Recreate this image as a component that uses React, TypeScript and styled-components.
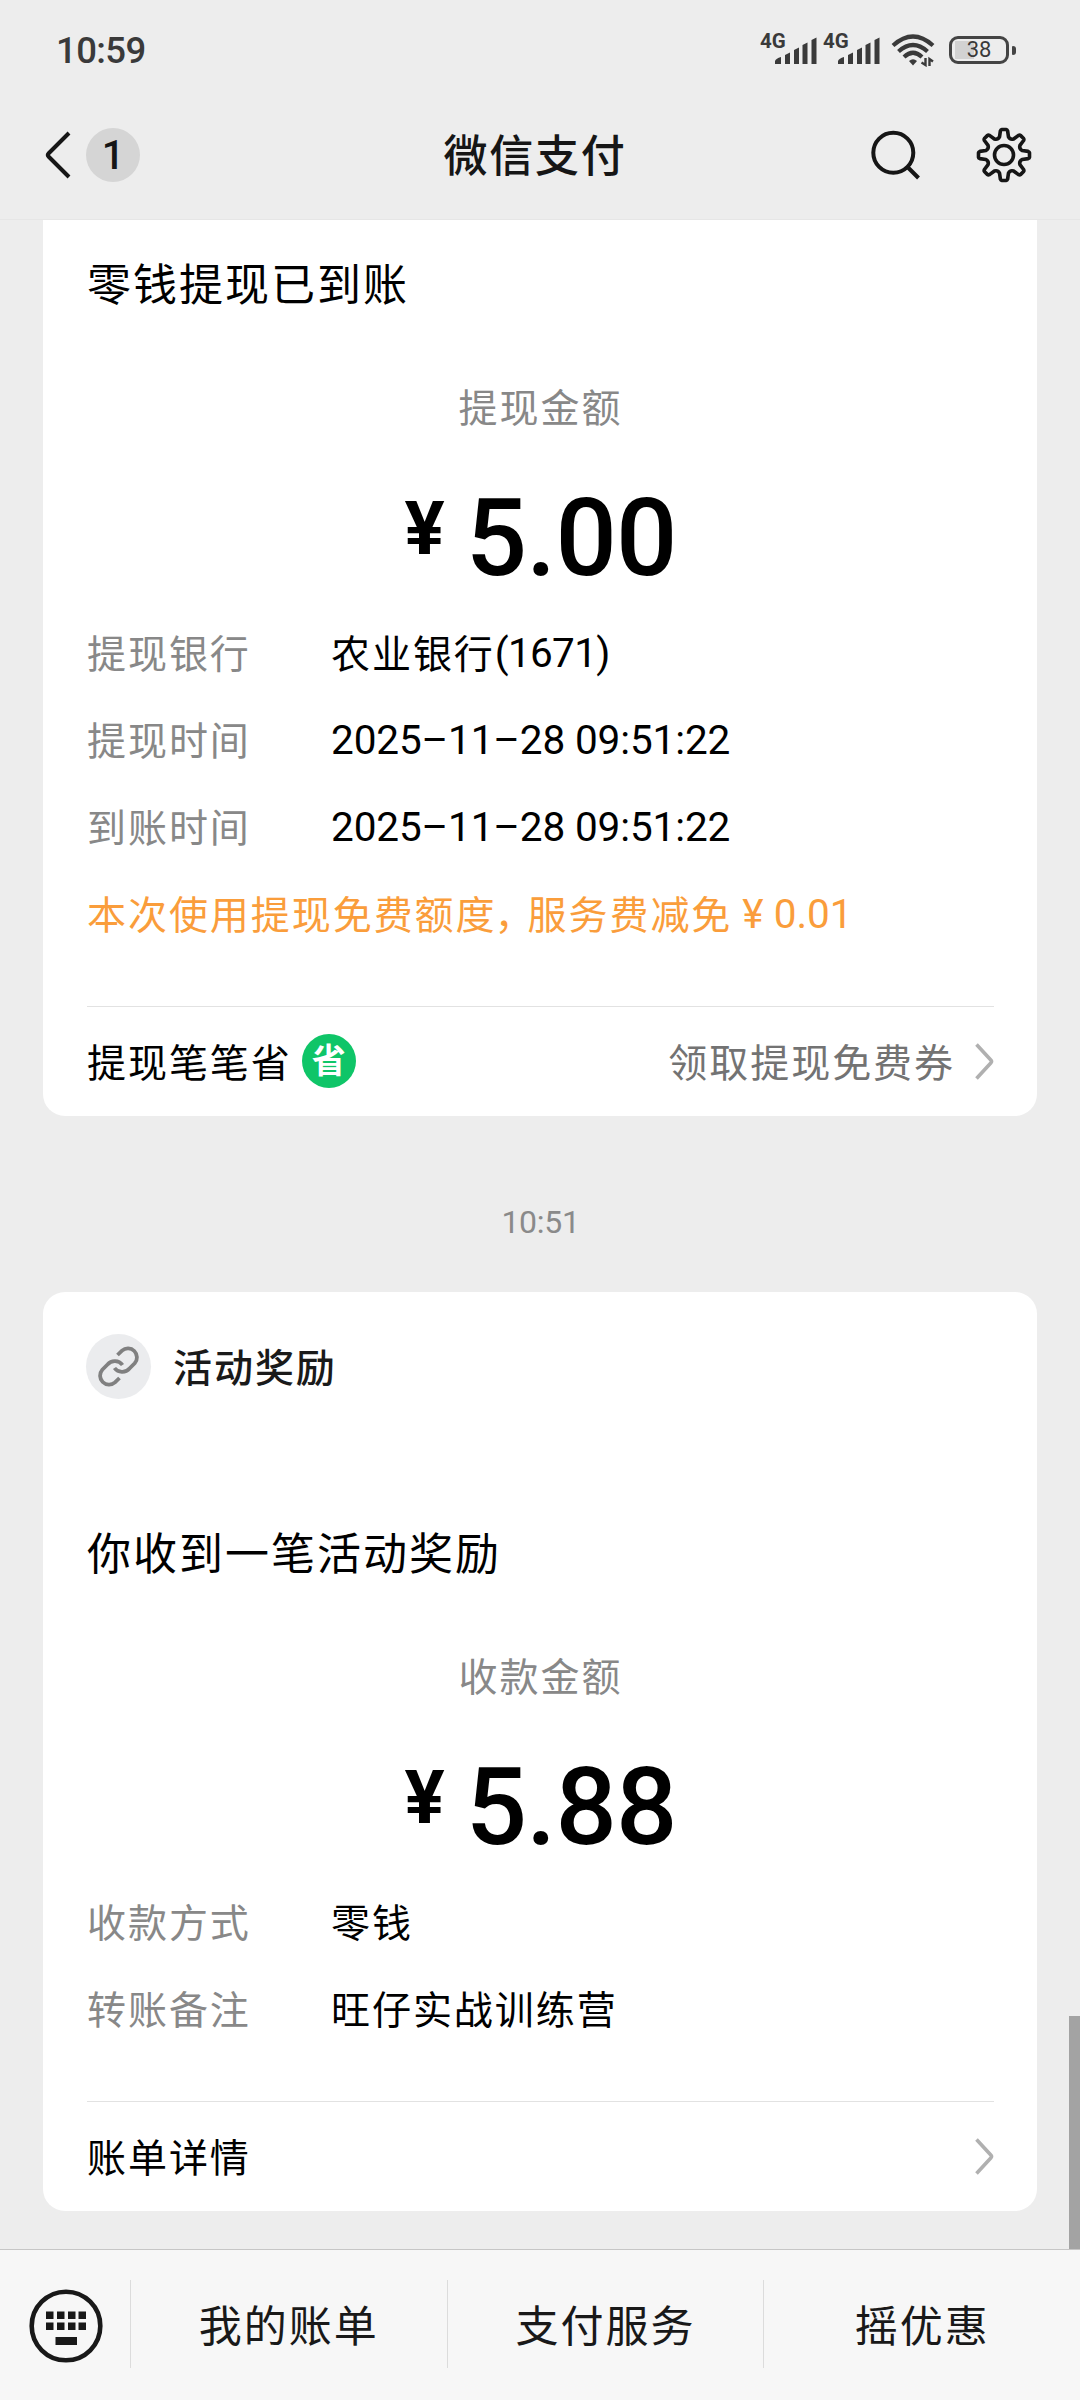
import React from "react";
import styled, { createGlobalStyle } from "styled-components";

const GlobalStyle = createGlobalStyle`
  * { box-sizing: border-box; }
  body {
    margin: 0;
    background: #ededed;
    font-family: Roboto, "Noto Sans CJK SC", sans-serif;
    color: #000;
  }
`;

const Screen = styled.div`
  width: 1080px;
  height: 2400px;
  display: flex;
  flex-direction: column;
  background: #ededed;
  overflow: hidden;
`;

const Header = styled.header`
  height: 220px;
  flex: none;
  display: flex;
  flex-direction: column;
`;

const StatusBar = styled.div`
  height: 100px;
  padding: 0 64px 0 56px;
  display: flex;
  align-items: center;
  justify-content: space-between;
  color: #3a3a3a;
`;

const Clock = styled.span`
  font-size: 36.5px;
  font-weight: 500;
  line-height: 44px;
  padding-top: 2px;
  letter-spacing: -0.6px;
`;

const StatusIcons = styled.div`
  display: flex;
  align-items: center;
`;

const Cell = styled.div`
  display: flex;
  align-items: flex-start;
  width: 63px;
  height: 30px;
`;

const Network = styled.span`
  width: 15px;
  font-size: 20.5px;
  font-weight: 700;
  line-height: 13px;
  white-space: nowrap;
`;

const Battery = styled.div`
  display: flex;
  align-items: center;
  gap: 3px;
  margin-left: 14px;
`;

const BatteryShell = styled.div`
  width: 60px;
  height: 28px;
  border: 3px solid #444;
  border-radius: 9px;
  display: flex;
  align-items: center;
  justify-content: center;
  font-size: 22px;
  line-height: 22px;
  background: linear-gradient(#d2d2d2, #d2d2d2) 3px 2px / 19px 18px no-repeat;
`;

const BatteryTip = styled.div`
  width: 4px;
  height: 9px;
  border-radius: 1px 3px 3px 1px;
  background: #444;
`;

const NavBar = styled.nav`
  height: 120px;
  padding: 0 48px 9px 44px;
  border-bottom: 1px solid #e6e6e6;
  display: grid;
  grid-template-columns: 1fr auto 1fr;
  align-items: center;
  color: #161616;
`;

const NavSide = styled.div<{ $end?: boolean }>`
  display: flex;
  align-items: center;
  justify-content: ${(p) => (p.$end ? "flex-end" : "flex-start")};
  gap: ${(p) => (p.$end ? 56 : 14)}px;
`;

const UnreadCount = styled.span`
  width: 54px;
  height: 54px;
  border-radius: 50%;
  background: #d5d5d5;
  font-size: 40px;
  font-weight: 500;
  line-height: 55px;
  text-align: center;
`;

const NavTitle = styled.h1`
  margin: 0;
  font-size: 44px;
  font-weight: 500;
  line-height: 60px;
  letter-spacing: 1.8px;
  padding: 4px 6px 0 0;
`;

const Body = styled.main`
  height: 2029px;
  flex: none;
  padding: 0 43px;
  position: relative;
`;

const ScrollThumb = styled.div`
  position: absolute;
  right: 0;
  bottom: 0;
  width: 11px;
  height: 233px;
  background: #a3a3a3;
`;

const Card = styled.section<{ $cut?: boolean }>`
  background: #fff;
  border-radius: ${(p) => (p.$cut ? "0 0 22px 22px" : "22px")};
  padding: 0 43px 0 44px;
  display: flex;
  flex-direction: column;
`;

const Source = styled.div`
  height: 197px;
  padding-top: 42px;
  display: flex;
  align-items: flex-start;
  gap: 22px;
`;

const SourceIcon = styled.span`
  width: 65px;
  height: 65px;
  margin-left: -1px;
  border-radius: 50%;
  background: #ebecee;
  display: flex;
  align-items: center;
  justify-content: center;
`;

const SourceName = styled.span`
  font-size: 39px;
  font-weight: 500;
  line-height: 71px;
  letter-spacing: 1.95px;
  color: #1a1a1a;
`;

const CardTitle = styled.h2`
  margin: 0;
  padding-top: 34px;
  height: 157px;
  font-size: 44px;
  font-weight: 400;
  line-height: 64px;
  letter-spacing: 2px;
`;

const Caption = styled.div`
  height: 60px;
  text-align: center;
  font-size: 39px;
  line-height: 65px;
  letter-spacing: 2px;
  color: #888;
`;

const Amount = styled.div`
  height: 172px;
  padding-top: 30px;
  display: flex;
  justify-content: center;
  align-items: center;
  gap: 21px;
  font-weight: 500;
`;

const Currency = styled.span`
  font-size: 75px;
  font-weight: 700;
  line-height: 80px;
  margin-bottom: 21px;
`;

const Figure = styled.span`
  font-size: 108px;
  line-height: 120px;
  letter-spacing: -0.8px;
`;

const Row = styled.div`
  height: 87px;
  display: flex;
  font-size: 39px;
  line-height: 92px;
  letter-spacing: 1.95px;
  white-space: pre;
`;

const Label = styled.span`
  width: 244px;
  color: #888;
`;

const Value = styled.span``;

const Num = styled.span<{ $ls?: number }>`
  font-size: 40.5px;
  vertical-align: 1px;
  line-height: 1;
  letter-spacing: ${(p) => p.$ls ?? 0}px;
`;

const Notice = styled(Row)`
  color: #fa9d3b;
`;

const Comma = styled.span`
  margin-left: -2px;
  letter-spacing: -6px;
`;

const CardFooter = styled.div`
  height: 110px;
  margin-top: 49px;
  border-top: 1px solid #e2e2e2;
  display: flex;
  align-items: center;
  font-size: 39px;
  line-height: 60px;
  letter-spacing: 1.95px;
`;

const FooterText = styled.span<{ $muted?: boolean }>`
  padding-top: 5px;
  margin-left: ${(p) => (p.$muted ? "auto" : "0")};
  margin-right: ${(p) => (p.$muted ? "20px" : "auto")};
  color: ${(p) => (p.$muted ? "#737373" : "#000")};
`;

const FooterLead = styled.div`
  display: flex;
  align-items: center;
  gap: 10px;
`;

const SaveBadge = styled.span`
  width: 54px;
  height: 54px;
  margin-bottom: 1px;
  border-radius: 50%;
  background: #0fc568;
  color: #fff;
  font-size: 34px;
  font-weight: 700;
  line-height: 54px;
  letter-spacing: 0;
  text-align: center;
`;

const TimeStamp = styled.div`
  height: 176px;
  padding: 3px 0 0 1px;
  margin-top: 34px;
  margin-bottom: -34px;
  text-align: center;
  font-size: 32px;
  line-height: 139px;
  letter-spacing: -0.3px;
  color: #8a8a8a;
`;

const BottomBar = styled.footer`
  height: 151px;
  flex: none;
  background: #f7f7f7;
  border-top: 1px solid #c6c6c6;
  display: flex;
  align-items: center;
`;

const KeyboardButton = styled.div`
  width: 130px;
  padding: 1px 0 0 1px;
  display: flex;
  justify-content: center;
`;

const MenuItem = styled.div`
  flex: 1;
  height: 88px;
  margin-bottom: 2px;
  border-left: 1px solid #dcdcdc;
  text-align: center;
  font-size: 43px;
  line-height: 95px;
  letter-spacing: 2px;
  color: #191919;
`;

const Signal = () => (
  <Cell>
    <Network>4G</Network>
    <svg width="42" height="30" viewBox="0 0 42 30" fill="#3a3a3a">
      <path d="M0 29V26Q1 23.500 6 22V29ZM10 29V20L15 17.500V29ZM19 29V15L24 12.500V29ZM27.500 29V10L32.500 7.500V29ZM36.500 29V5L41.500 2.500V29Z" />
    </svg>
  </Cell>
);

const WifiIcon = styled.svg`
  margin-left: 5px;
`;

const Wifi = () => (
  <WifiIcon width="44" height="33" viewBox="0 0 44 33" fill="none" stroke="#3a3a3a" strokeWidth="4.200">
    <path d="M2 11.500Q22 -6.500 42 11.500M7.500 17.500Q22 4.500 36.500 17.500M13 23Q22 14.500 31 23" />
    <path d="M18 27Q22 23.500 26 27L22 31.500Z" fill="#3a3a3a" stroke="none" />
    <path d="M34.500 24V31L30.500 28.500M38.500 32V25L42 27.500" strokeWidth="2.400" />
  </WifiIcon>
);

const Chevron = () => (
  <svg width="19" height="37" viewBox="0 0 19 37" fill="none" stroke="#b0b0b0" strokeWidth="3.600">
    <path d="M1.500 1.500L15.800 17Q17.200 18.500 15.800 20L1.500 35.500" />
  </svg>
);

const polar = (r: number, deg: number) => {
  const t = (deg * Math.PI) / 180;
  return `${(28 + r * Math.sin(t)).toFixed(2)} ${(28 - r * Math.cos(t)).toFixed(2)}`;
};

const gearOutline =
  Array.from({ length: 8 }, (_, i) => {
    const a = i * 45;
    const start = i === 0 ? "M" : "L";
    return `${start}${polar(18.6, a - 14)}L${polar(24.4, a - 8.5)}Q${polar(25.6, a - 7)} ${polar(25.6, a - 5)}L${polar(25.6, a + 5)}Q${polar(25.6, a + 7)} ${polar(24.4, a + 8.5)}L${polar(18.6, a + 14)}Q${polar(16.2, a + 22.5)} ${polar(18.6, a + 31)}`;
  }).join("") + "Z";

const Gear = () => (
  <svg width="56" height="56" viewBox="0 0 56 56" fill="none" stroke="#161616" strokeWidth="3.600" strokeLinejoin="round">
    <path d={gearOutline} />
    <circle cx="28" cy="28" r="9.500" />
  </svg>
);

const Search = () => (
  <svg width="50" height="50" viewBox="0 0 50 50" fill="none" stroke="#161616" strokeWidth="4">
    <circle cx="23.300" cy="22.700" r="20" />
    <path d="M37.500 37L48.500 48" />
  </svg>
);

const Back = () => (
  <svg width="28" height="48" viewBox="0 0 28 48" fill="none" stroke="#161616" strokeWidth="4">
    <path d="M25 2L4.500 22.500Q3 24 4.500 25.500L25 46" />
  </svg>
);

const Link = () => (
  <svg width="43" height="43" viewBox="0 0 43 43" fill="none" stroke="#808080" strokeWidth="3.800">
    <path d="M20.500 10L25 5.600A9 9 0 0 1 37.700 18.300L32.500 23.500A9.500 9.500 0 0 1 17.500 23" />
    <path d="M22.500 33L18 37.400A9 9 0 0 1 5.300 24.700L10.500 19.500A9.500 9.500 0 0 1 25.500 20" />
  </svg>
);

const Keyboard = () => (
  <svg width="74" height="74" viewBox="0 0 74 74" fill="#191919">
    <circle cx="37" cy="37" r="34.300" fill="none" stroke="#191919" strokeWidth="4.600" />
    {[17, 28, 39, 49.500].map((x) => (
      <path key={x} d={`M${x} 22.500h7.500v7.500h-7.500zM${x} 33.500h7.500v7.500h-7.500z`} />
    ))}
    <path d="M26.500 48h21.500v8h-21.500z" />
  </svg>
);

const DateTime = () => (
  <Value>
    <Num $ls={-0.12}>2025–11–28 09:51:22</Num>
  </Value>
);

export default function App() {
  return (
    <Screen>
      <GlobalStyle />
      <Header>
        <StatusBar>
          <Clock>10:59</Clock>
          <StatusIcons>
            <Signal />
            <Signal />
            <Wifi />
            <Battery>
              <BatteryShell>38</BatteryShell>
              <BatteryTip />
            </Battery>
          </StatusIcons>
        </StatusBar>
        <NavBar>
          <NavSide>
            <Back />
            <UnreadCount>1</UnreadCount>
          </NavSide>
          <NavTitle>微信支付</NavTitle>
          <NavSide $end>
            <Search />
            <Gear />
          </NavSide>
        </NavBar>
      </Header>
      <Body>
        <Card $cut>
          <CardTitle>零钱提现已到账</CardTitle>
          <Caption>提现金额</Caption>
          <Amount>
            <Currency>¥</Currency>
            <Figure>5.00</Figure>
          </Amount>
          <Row>
            <Label>提现银行</Label>
            <Value>农业银行<Num $ls={-0.7}>(1671)</Num></Value>
          </Row>
          <Row>
            <Label>提现时间</Label>
            <DateTime />
          </Row>
          <Row>
            <Label>到账时间</Label>
            <DateTime />
          </Row>
          <Notice>
            <Value>本次使用提现免费额度<Comma>，</Comma>服务费减免<Num> ¥ 0.01</Num></Value>
          </Notice>
          <CardFooter>
            <FooterLead>
              <FooterText>提现笔笔省</FooterText>
              <SaveBadge>省</SaveBadge>
            </FooterLead>
            <FooterText $muted>领取提现免费券</FooterText>
            <Chevron />
          </CardFooter>
        </Card>
        <TimeStamp>10:51</TimeStamp>
        <Card>
          <Source>
            <SourceIcon>
              <Link />
            </SourceIcon>
            <SourceName>活动奖励</SourceName>
          </Source>
          <CardTitle>你收到一笔活动奖励</CardTitle>
          <Caption>收款金额</Caption>
          <Amount>
            <Currency>¥</Currency>
            <Figure>5.88</Figure>
          </Amount>
          <Row>
            <Label>收款方式</Label>
            <Value>零钱</Value>
          </Row>
          <Row>
            <Label>转账备注</Label>
            <Value>旺仔实战训练营</Value>
          </Row>
          <CardFooter>
            <FooterText>账单详情</FooterText>
            <Chevron />
          </CardFooter>
        </Card>
        <ScrollThumb />
      </Body>
      <BottomBar>
        <KeyboardButton>
          <Keyboard />
        </KeyboardButton>
        <MenuItem>我的账单</MenuItem>
        <MenuItem>支付服务</MenuItem>
        <MenuItem>摇优惠</MenuItem>
      </BottomBar>
    </Screen>
  );
}
